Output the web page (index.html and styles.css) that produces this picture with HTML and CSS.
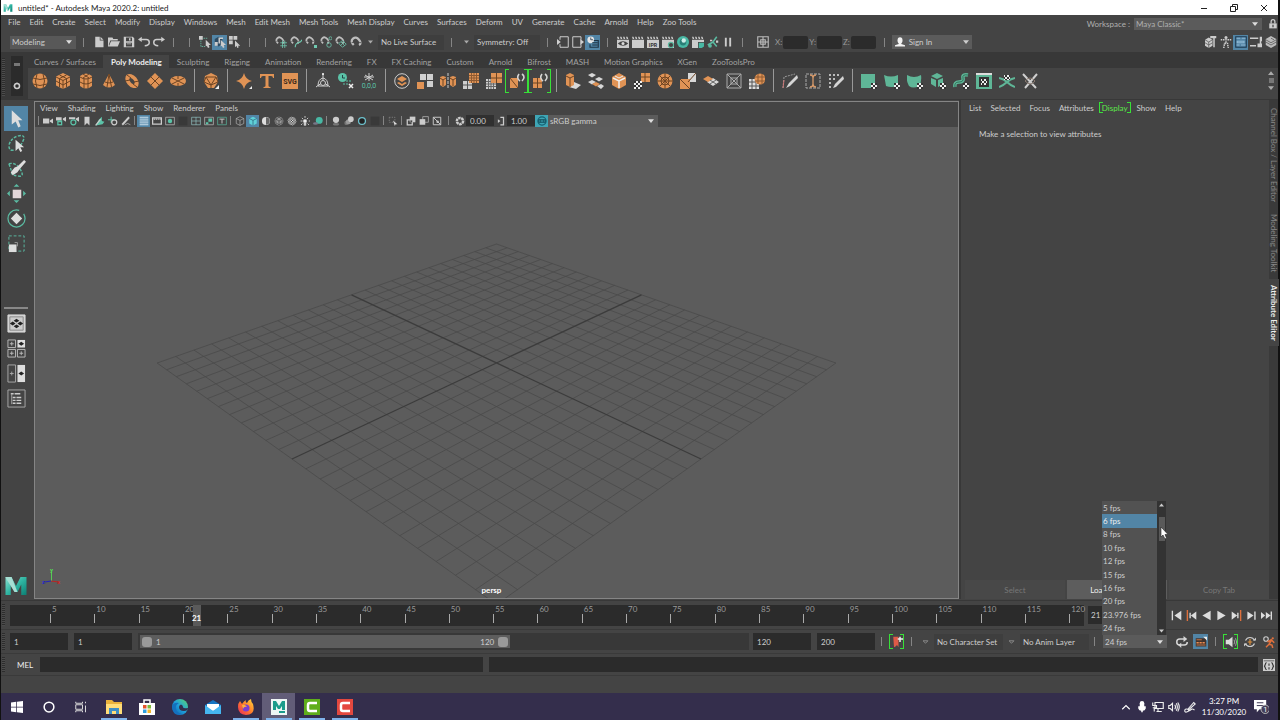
FILE: index.html
```html
<!DOCTYPE html>
<html lang="en">
<head>
<meta charset="utf-8">
<title>untitled* - Autodesk Maya 2020.2: untitled</title>
<link rel="stylesheet" href="styles.css">
</head>
<body>
<svg class="sprite" aria-hidden="true">
  <defs>
    <linearGradient id="teal" x1="0" y1="0" x2="1" y2="1"><stop offset="0" stop-color="#8be0d2"/><stop offset=".5" stop-color="#2fb5a2"/><stop offset="1" stop-color="#0b7f74"/></linearGradient>
    <linearGradient id="edgefill" x1="0" y1="1" x2="1" y2="0"><stop offset="0" stop-color="#0c59a4"/><stop offset=".5" stop-color="#1fa0dc"/><stop offset="1" stop-color="#5fd86a"/></linearGradient>
    <linearGradient id="foxfill" x1="1" y1="0" x2="0" y2="1"><stop offset="0" stop-color="#ffdc3c"/><stop offset=".5" stop-color="#ff7a2a"/><stop offset="1" stop-color="#e8265f"/></linearGradient>
    <pattern id="chk" width="4" height="4" patternUnits="userSpaceOnUse"><path fill="#eee" d="M0 0h4v4H0z"/><path fill="#333" d="M0 0h2v2H0zM2 2h2v2H2z"/></pattern>
  </defs>

  <symbol id="m" viewBox="0 0 16 16"><path fill="url(#teal)" d="M1 2h4l3 6 3-6h4v12h-3.500V7L9 12H7L4.500 7v7H1z"/><path fill="#a6ded3" d="M1 2h4l4 10H7L2 4z"/></symbol>
  <symbol id="caret" viewBox="0 0 8 5"><path fill="currentColor" d="M0 0h8L4 5z"/></symbol>
  <symbol id="caret-up" viewBox="0 0 8 5"><path fill="currentColor" d="M0 5h8L4 0z"/></symbol>
  <symbol id="caret-line" viewBox="0 0 8 5"><path fill="none" stroke="#999" d="M1 1h6L4 4z"/></symbol>
  <symbol id="lock" viewBox="0 0 16 16"><path fill="none" stroke="currentColor" stroke-width="2" d="M5 7V4a3 3 0 0 1 6 0v3"/><path fill="currentColor" d="M2 7h12v8H2z"/><path fill="#444" d="M7 9h2v4H7z"/></symbol>

  <symbol id="new" viewBox="0 0 16 16"><path fill="currentColor" d="M3 1h6v5h5v9H3zM10 1l4 4h-4z"/></symbol>
  <symbol id="open" viewBox="0 0 16 16"><path fill="currentColor" d="M0 2h6l1 2h6v2H3L1 12l1 2H0zM4 7h12l-3 7H1z"/></symbol>
  <symbol id="save" viewBox="0 0 16 16"><path fill="currentColor" fill-rule="evenodd" d="M1 1h12l2 2v12H1zM4 2v5h8V2zM4 9v5h8V9zM8 3h2v3H8zM5 10h6v1H5z"/></symbol>
  <symbol id="undo" viewBox="0 0 16 16"><path fill="currentColor" d="M5 1v7L0 4.500z"/><path fill="none" stroke="currentColor" stroke-width="2" d="M4 4.500h7q4 0 4 4T9 13"/></symbol>
  <symbol id="redo" viewBox="0 0 16 16"><path fill="currentColor" d="M11 1v7l5-3.500z"/><path fill="none" stroke="currentColor" stroke-width="2" d="M12 4.500H5q-4 0-4 4T7 13"/></symbol>
  <symbol id="arrow" viewBox="0 0 16 16"><path fill="currentColor" d="M4 1l9 8.500H9.500l2 5-2 1-2.200-5L4 13z"/></symbol>
  <symbol id="sel-h" viewBox="0 0 16 16"><path fill="currentColor" d="M0 0h5v5H0zM9 5l7 7h-3l1 3-2 1-1.500-3L9 14z"/><path stroke="#6fc9b0" stroke-dasharray="2 1" fill="none" d="M2.500 6v8H8M6 3h6"/></symbol>
  <symbol id="sel-o" viewBox="0 0 16 16"><path fill="#2c4b63" d="M1 4l5-3 5 3v7l-5 3-5-3z"/><path fill="currentColor" d="M1 8h4v5H1zM6 2h6v2H8v6H6zM9 5l7 7h-3l1 3-2 1-1.500-3L9 14z"/></symbol>
  <symbol id="sel-c" viewBox="0 0 16 16"><path fill="currentColor" d="M0 0h5v5H0zM6 0h5v5H6zM0 6h5v5H0zM8 6l7 7h-3l1 2-2 1-1-3-2 2z"/></symbol>
  <symbol id="mag" viewBox="0 0 16 16"><path fill="none" stroke="#bdbdbd" stroke-width="3" d="M5 12Q0 7 4 3.500t8 1.500 0 7"/><path stroke="#444" d="M2 9l4-1M10 8l5 1"/></symbol>
  <symbol id="mag-g" viewBox="0 0 16 16"><use href="#mag" width="13" height="13"/><path stroke="#6fc9b0" d="M10 6v10M13 6v10M7 9h9M7 13h9"/></symbol>
  <symbol id="mag-c" viewBox="0 0 16 16"><use href="#mag" width="13" height="13"/><path stroke="#6fc9b0" stroke-width="1.500" fill="none" d="M7 15q0-5 4-6t5-4"/></symbol>
  <symbol id="mag-p" viewBox="0 0 16 16"><use href="#mag" width="13" height="13"/><path fill="#6fc9b0" d="M12 12h4v4h-4z"/></symbol>
  <symbol id="mag-s" viewBox="0 0 16 16"><use href="#mag" width="13" height="13"/><circle cx="12" cy="12" r="3" fill="none" stroke="#6fc9b0"/><circle cx="14" cy="3" r="2" fill="none" stroke="#6fc9b0"/></symbol>
  <symbol id="mag-v" viewBox="0 0 16 16"><use href="#mag" width="13" height="13"/><path fill="none" stroke="#6fc9b0" d="M10 6l5 5-5 4-5-5zM8 8l5 5M12 8l-5 5"/></symbol>
  <symbol id="in" viewBox="0 0 16 16"><path fill="none" stroke="#d0d0d0" stroke-width="1.300" d="M4 5V1h11v14H4v-4"/><path fill="#d0d0d0" d="M0 4l5 4-5 4z"/></symbol>
  <symbol id="out" viewBox="0 0 16 16"><path fill="none" stroke="#d0d0d0" stroke-width="1.300" d="M12 5V1H1v14h11v-4"/><path fill="#d0d0d0" d="M11 4l5 4-5 4z"/></symbol>
  <symbol id="hist" viewBox="0 0 16 16"><circle cx="5" cy="5" r="4.500" fill="#e6e6e6"/><path fill="none" stroke="#234" d="M5 2v3h3"/><path fill="none" stroke="#1e3446" stroke-width="1.500" d="M9 6h6v9H4v-4M7 9h7M7 12h7"/></symbol>
  <symbol id="clap" viewBox="0 0 16 16"><path fill="currentColor" d="M0 5h16v11H0zM0 1h2l1 3H1zM4 1h2l1 3H5zM8 1h2l1 3H9zM12 1h2l1 3h-2z"/></symbol>
  <symbol id="clap-eye" viewBox="0 0 16 16"><use href="#clap"/><path fill="#444" d="M1 10q7-6 14 0-7 6-14 0"/><circle cx="8" cy="10" r="2" fill="#ddd"/></symbol>
  <symbol id="clap-gear" viewBox="0 0 16 16"><use href="#clap"/><circle cx="12" cy="12" r="3.500" fill="#444" stroke="#5bbba2" stroke-width="1.500"/></symbol>
  <symbol id="ball" viewBox="0 0 16 16"><circle cx="8" cy="8" r="8" fill="#48b8a4"/><circle cx="8" cy="8" r="4.500" fill="#2a7f77"/><circle cx="9" cy="6" r="3" fill="#cdeee8"/></symbol>
  <symbol id="clap-set" viewBox="0 0 16 16"><use href="#clap"/><path fill="#444" d="M8 8h8v8H8z"/><path fill="#48b8a4" d="M9 9h7v5l-3 2H9z"/></symbol>
  <symbol id="render-cut" viewBox="0 0 16 16"><path stroke="#5bbba2" stroke-width="2" fill="none" d="M1 12l7-4 5 6M8 8l5-7"/><circle cx="4" cy="13" r="2.500" fill="#5bbba2"/><path fill="#ccc" d="M12 6h3v3h-3zM4 5h3v2H4z"/></symbol>
  <symbol id="pause" viewBox="0 0 16 16"><path fill="currentColor" d="M3 1h3v14H3zM10 1h3v14h-3z"/></symbol>
  <symbol id="layout" viewBox="0 0 16 16"><path fill="none" stroke="#bbb" stroke-width="1.500" d="M1 1h14v14H1zM8 1v14M1 8h14M5 5h6v6H5z"/></symbol>
  <symbol id="user" viewBox="0 0 16 16"><ellipse cx="8" cy="5.500" rx="4" ry="5" fill="#f2f2f2"/><path fill="#f2f2f2" d="M6 8h4v3l6 2v2H0v-2l6-2z"/></symbol>
  <symbol id="kit" viewBox="0 0 16 16"><path fill="currentColor" d="M0 5l5-3 5 3v8l-5 3-5-3zM7 0h8v3h-2v12h-2V3H7z"/><path fill="none" stroke="#555" d="M0 5l5 3 5-3M5 8v8M0 9l5 3 5-3"/></symbol>
  <symbol id="rig" viewBox="0 0 16 16"><circle cx="8" cy="2" r="2" fill="currentColor"/><path stroke="currentColor" stroke-width="2" stroke-dasharray="2 1" fill="none" d="M1 5h14M8 4v6M5 16l1-6h4l1 6"/></symbol>
  <symbol id="attr" viewBox="0 0 16 16"><path fill="none" stroke="#1d3950" stroke-width="1.500" d="M1 1h14v14H1z"/><path fill="none" stroke="#8fb8d4" stroke-width="1.500" d="M2 3h5M9 3h5M3 7h9v2H3zM2 12h4M8 12h6"/></symbol>
  <symbol id="tset" viewBox="0 0 16 16"><path fill="currentColor" d="M0 2h11v2H0zM13 1h3v6h-3zM0 12h8v2H0zM10 10h6v5h-6zM13 6h2v5h-2z"/></symbol>
  <symbol id="layers" viewBox="0 0 16 16"><path fill="#bbb" d="M8 0l7 4v8l-7 4-7-4V4z"/><path fill="none" stroke="#555" d="M1 5l7 4 7-4M1 8l7 4 7-4M8 3l4 2"/></symbol>
  <symbol id="gear" viewBox="0 0 16 16"><circle cx="8" cy="8" r="5" fill="none" stroke="#ccc" stroke-width="3"/><path stroke="#ccc" stroke-width="2" stroke-dasharray="2 12" d="M1 8h14M8 1v14"/></symbol>

  <symbol id="sphere" viewBox="0 0 16 16"><circle cx="8" cy="8" r="7.500" fill="#e09355"/><path fill="none" stroke="#6d4423" d="M1 5q7 3 14 0M1 11q7 3 14 0M5 1q-3 7 0 14M11 1q3 7 0 14"/></symbol>
  <symbol id="cube" viewBox="0 0 16 16"><path fill="#e09355" d="M8 0l7 3.500v9L8 16l-7-3.500v-9z"/><path fill="none" stroke="#6d4423" d="M1 4l7 3.500L15 4M8 7.500V16M1 8l7 4 7-4M4.500 2l7 3.500V14M11.500 2l-7 3.500V14"/></symbol>
  <symbol id="cyl" viewBox="0 0 16 16"><path fill="#e09355" d="M2 3q6-5 12 0v10q-6 5-12 0z"/><path fill="none" stroke="#6d4423" d="M2 4q6 4 12 0M2 9q6 4 12 0M6 6v9M10 6v9M5 1l6 4M11 1L5 5"/></symbol>
  <symbol id="cone" viewBox="0 0 16 16"><path fill="#e09355" d="M8 1l6 11q-6 5-12 0z"/><path fill="none" stroke="#6d4423" d="M8 1L6 14M8 1l2.500 13M4 9q4 2 8 0"/></symbol>
  <symbol id="torus" viewBox="0 0 16 16"><ellipse cx="8" cy="8" rx="8" ry="5.500" transform="rotate(50 8 8)" fill="#e09355"/><ellipse cx="8" cy="8" rx="3.500" ry="1.800" transform="rotate(50 8 8)" fill="#444"/><path stroke="#6d4423" d="M3 2l4 3M1 8l5-1M13 14l-4-3M15 8l-5 1"/></symbol>
  <symbol id="plane" viewBox="0 0 16 16"><path fill="#e09355" d="M8 0l8 8-8 8-8-8z"/><path stroke="#6d4423" d="M4 4l8 8M12 4l-8 8"/></symbol>
  <symbol id="disc" viewBox="0 0 16 16"><ellipse cx="8" cy="8" rx="8" ry="5" fill="#e09355"/><path stroke="#6d4423" d="M2 5l12 6M14 5L2 11M8 3v3M8 10v3"/></symbol>
  <symbol id="plat" viewBox="0 0 16 16"><path fill="#e09355" d="M8 0l6 3 1 6-4 6H5L1 9l1-6z"/><path fill="none" stroke="#6d4423" d="M3 4h10l-5 8zM3 4L1 9l7 3 7-3-2-5M8 12v3"/><path fill="#eee" d="M16 12v4h-4z"/></symbol>
  <symbol id="star" viewBox="0 0 16 16"><path fill="#e09355" d="M8 0q1.500 6.500 8 8-6.500 1.500-8 8-1.500-6.500-8-8 6.500-1.500 8-8"/><path fill="#eee" d="M16 13v3h-3z"/></symbol>
  <symbol id="type" viewBox="0 0 16 16"><path fill="#e09355" d="M1 1h14v4h-1q0-2-2-2H9.500v10q0 1 2 1v1h-7v-1q2 0 2-1V3H4Q2 3 2 5H1z"/></symbol>
  <symbol id="block" viewBox="0 0 16 16"><path fill="#e09355" d="M0 0h16v16H0z"/></symbol>
  <symbol id="center" viewBox="0 0 16 16"><path fill="none" stroke="#cfcfcf" d="M8 8V1M8 9l-7 5M8 9l7 5M3 13q0-7 5-8 5 1 5 8z"/><circle cx="8" cy="10" r="2.500" fill="#444" stroke="#cfcfcf"/><circle cx="8" cy="1" r="1" fill="#fff"/></symbol>
  <symbol id="delhist" viewBox="0 0 16 16"><circle cx="4.500" cy="4.500" r="4.500" fill="#5bc3a8"/><path stroke="#244" fill="none" d="M4.500 2v3H7"/><path stroke="#5bc3a8" stroke-dasharray="2 1" d="M5 11h5M8 8h6"/><path stroke="#eee" stroke-width="1.500" d="M11 11l4 4M15 11l-4 4"/></symbol>
  <symbol id="freeze" viewBox="0 0 16 16"><path stroke="#cfcfcf" fill="none" d="M8 0v8M4 2l8 5M12 2L4 7M3 4h10"/></symbol>
  <symbol id="combine" viewBox="0 0 16 16"><circle cx="8" cy="8" r="7.300" fill="none" stroke="#cfcfcf"/><path fill="#e09355" d="M3 6l5-3 5 3-5 3zM3 10l2-1 3 2 3-2 2 1-5 3z"/></symbol>
  <symbol id="separate" viewBox="0 0 16 16"><path fill="#cfcfcf" d="M3 1h6v6H3zM10 1h6v6h-6zM10 8h6v6h-6z"/><path fill="#e09355" d="M0 9h7v7H0z"/></symbol>
  <symbol id="mirror" viewBox="0 0 16 16"><path fill="#e09355" d="M0 4l3-1 3 1v8l-3 2-3-2zM10 4l3-1 3 1v8l-3 2-3-2z"/><path fill="none" stroke="#6d4423" d="M0 5l3 2 3-2M3 7v6M10 5l3 2 3-2M13 7v6"/><path stroke="#ccc" stroke-dasharray="3 1" d="M8 0v16"/></symbol>
  <symbol id="smooth" viewBox="0 0 16 16"><path fill="#cfcfcf" d="M0 8h9v8H0z"/><path stroke="#555" d="M4.500 8v8M0 12h9" /><path fill="#e09355" d="M6 0h10v10H6z"/><path stroke="#8d5a32" d="M8.500 0v10M11 0v10M13.500 0v10M6 2.500h10M6 5h10M6 7.500h10"/></symbol>
  <symbol id="reduce" viewBox="0 0 16 16"><path fill="#cfcfcf" d="M0 6h10v10H0z"/><path stroke="#666" d="M2.500 6v10M5 6v10M7.500 6v10M0 8.500h10M0 11h10M0 13.500h10"/><path fill="#e09355" d="M5 0h11v10H5z"/><path stroke="#6d4423" d="M10.500 0v10M5 5h11"/></symbol>
  <symbol id="swap1" viewBox="0 0 16 16"><path fill="#e09355" d="M1 5h8v10H1z"/><path stroke="#6d4423" d="M1 5l8 10"/><path fill="none" stroke="#d5d5d5" stroke-width="1.600" d="M10 1q-3 4 1 7M13 8q4-4 0-7"/></symbol>
  <symbol id="swap2" viewBox="0 0 16 16"><path fill="#e09355" d="M1 5h9v10H1z"/><path stroke="#6d4423" d="M5.500 5v10M1 10h9"/><path fill="none" stroke="#d5d5d5" stroke-width="1.600" d="M10 1q-3 4 1 7M13 8q4-4 0-7"/></symbol>
  <symbol id="extrude" viewBox="0 0 16 16"><path fill="#d8d8d8" d="M9 9l7 3-5 4-7-2z"/><path fill="#e09355" d="M1 2l4-2 4 2v10l-4 2-4-2z"/><path fill="none" stroke="#6d4423" d="M1 3l4 2 4-2M5 5v9"/></symbol>
  <symbol id="bridge" viewBox="0 0 16 16"><path fill="#d8d8d8" d="M4 0l4 2-4 2.500L0 2zM11 4l4 2-4 2.500L7 6zM4 7l4 2-4 2.500L0 9zM13 11l3 2-3 3-4-3z"/><path fill="#e09355" d="M8 9l4 2-4 2.500L4 11z"/></symbol>
  <symbol id="bevel" viewBox="0 0 16 16"><path fill="#e09355" d="M8 0l7 4v8l-7 4-7-4V4z"/><path fill="none" stroke="#eee" stroke-width="1.500" d="M2 5l6 3 6-3M8 8v7"/><path stroke="#eee" fill="none" d="M4 3l4 2 4-2"/></symbol>
  <symbol id="merge" viewBox="0 0 16 16"><path fill="#e09355" d="M7 0h9v9H7z"/><path fill="url(#chk)" d="M0 8h8v8H0z"/><path stroke="#6d4423" d="M11 0v9M7 4h9"/></symbol>
  <symbol id="wheel" viewBox="0 0 16 16"><circle cx="8" cy="8" r="7.500" fill="#e09355"/><path fill="none" stroke="#6d4423" d="M8 0v16M0 8h16M3 3l10 10M13 3L3 13"/><circle cx="8" cy="8" r="4" fill="none" stroke="#6d4423"/></symbol>
  <symbol id="fill" viewBox="0 0 16 16"><path fill="#d8d8d8" d="M8 0h8v9H8z"/><path fill="#e09355" d="M0 6h10v10H0z"/><path stroke="#6d4423" d="M0 6l10 10M8 9l8-9"/></symbol>
  <symbol id="flats" viewBox="0 0 16 16"><path fill="#d8d8d8" d="M10 5l6 4-6 4-6-4z"/><path fill="#e09355" d="M5 3l5 3-5 3-5-3z"/><path stroke="#666" d="M7 7l6 4M13 7l-6 4"/></symbol>
  <symbol id="cage" viewBox="0 0 16 16"><path fill="none" stroke="#aaa" d="M1 1h14v14H1zM1 1l14 14M15 1L1 15M5 5h6v6H5z"/></symbol>
  <symbol id="remesh" viewBox="0 0 16 16"><path fill="#ddd" d="M0 6h10v10H0z"/><path stroke="#555" d="M3 6v10M7 6v10M0 9h10M0 13h10"/><circle cx="11" cy="6" r="5.500" fill="#e09355"/><path fill="none" stroke="#8d5a32" d="M9 1v10M13 1v10M6 4h10M6 8h10"/></symbol>
  <symbol id="quad" viewBox="0 0 16 16"><path fill="none" stroke="#999" stroke-dasharray="2 1" d="M1 15L2 4l11-3"/><path fill="#d5d5d5" d="M4 15l3-5 8-8 1 3-8 8z"/><path stroke="#c77" d="M1 15l1-8"/></symbol>
  <symbol id="loop" viewBox="0 0 16 16"><path fill="none" stroke="#aaa" stroke-dasharray="3 1" d="M1 1h14v14H1z"/><path fill="none" stroke="#d79a6a" stroke-width="1.300" d="M5 2q3 0 3 3v6q0 3-3 3M11 2q-3 0-3 3M11 14q-3 0-3-3"/></symbol>
  <symbol id="draw" viewBox="0 0 16 16"><path stroke="#bbb" stroke-dasharray="2 2" stroke-width="2" d="M1 2h10M1 6h7M1 10h4M1 14h3"/><path fill="#d5d5d5" d="M5 15l2-4 8-8 1 3-8 8z"/></symbol>
  <symbol id="uv1" viewBox="0 0 16 16"><path fill="#5fb697" d="M0 1h14v14H0z"/><path fill="url(#chk)" d="M10 10h6v6h-6z"/></symbol>
  <symbol id="uv2" viewBox="0 0 16 16"><path fill="#5fb697" d="M0 2q7 3 14 0v11q-7 2-12 0z"/><path fill="url(#chk)" d="M10 10h6v6h-6z"/></symbol>
  <symbol id="uv3" viewBox="0 0 16 16"><path fill="#5fb697" d="M0 2q7 4 14 0 1 7-2 11-6 3-10 0-3-5-2-11"/><path fill="url(#chk)" d="M10 10h6v6h-6z"/></symbol>
  <symbol id="uv4" viewBox="0 0 16 16"><path fill="#5fb697" d="M7 0l6 3-6 3-6-3zM1 5l5 2v7l-5-3zM13 5L8 7v7l5-3z"/><path fill="url(#chk)" d="M10 10h6v6h-6z"/></symbol>
  <symbol id="uv5" viewBox="0 0 16 16"><path fill="none" stroke="#5fb697" stroke-width="3.500" d="M2 14q-1-5 4-5t4-4 5-3"/><path stroke="#31705b" fill="none" d="M2 14q-1-5 4-5t4-4 5-3"/><path fill="url(#chk)" d="M10 10h6v6h-6z"/></symbol>
  <symbol id="uv6" viewBox="0 0 16 16"><path fill="#5fb697" d="M0 0h16v16H0z"/><path fill="#ddd" d="M0 0h16v2H0z"/><path fill="#333" d="M3 4h10v10H3z"/><path fill="url(#chk)" d="M5 6h6v6H5z"/></symbol>
  <symbol id="uv7" viewBox="0 0 16 16"><path fill="none" stroke="#5fb697" stroke-width="2" d="M0 5q5 1 8 4t8 5M16 5q-5 1-8 4t-8 5"/><path fill="url(#chk)" d="M5 2h6v5H5z"/></symbol>
  <symbol id="uv8" viewBox="0 0 16 16"><path stroke="#cfcfcf" stroke-width="2" d="M1 1l13 14M15 1L3 15"/><path fill="none" stroke="#8a7a70" d="M3 8q5-6 10 0-4 6-10 0"/></symbol>

  <symbol id="cam" viewBox="0 0 16 16"><path fill="currentColor" d="M0 4h10v8H0zM11 7l5-3v8l-5-3z"/></symbol>
  <symbol id="cam-l" viewBox="0 0 16 16"><path fill="currentColor" d="M0 2h9v5H0zM11 4l5-3v8l-5-3z"/><path fill="#5bc3a8" d="M2 7h8v8H2z"/><path fill="#444" d="M4 10h4v3H4z"/></symbol>
  <symbol id="cam-s" viewBox="0 0 16 16"><path fill="currentColor" d="M0 2h10v3H0zM11 4l5-3v8l-5-3z"/><circle cx="7" cy="10" r="4" fill="none" stroke="#5bc3a8" stroke-width="2"/></symbol>
  <symbol id="mark" viewBox="0 0 16 16"><path fill="currentColor" d="M4 1h8v14l-4-4-4 4z"/></symbol>
  <symbol id="leaf" viewBox="0 0 16 16"><path fill="#5bc3a8" d="M1 15l5-9 5-5v7l4 1-3 4z"/><path stroke="#ccc" stroke-width="2" d="M1 15L9 5"/></symbol>
  <symbol id="pan" viewBox="0 0 16 16"><path stroke="#5bc3a8" stroke-width="1.500" d="M5 1v10M0 6h10"/><circle cx="10" cy="10" r="4" fill="none" stroke="#ccc" stroke-width="2"/></symbol>
  <symbol id="pen" viewBox="0 0 16 16"><path stroke="#ccc" stroke-width="3" d="M2 14L13 2"/><path fill="none" stroke="#ccc" d="M6 14q5-4 9 0"/></symbol>
  <symbol id="lines" viewBox="0 0 16 16"><path stroke="#d5e5f2" stroke-width="1.500" d="M1 2h14M1 5h14M1 8h14M1 11h14M1 14h14"/></symbol>
  <symbol id="film" viewBox="0 0 16 16"><path fill="none" stroke="#ccc" stroke-width="2" d="M0 3h16M0 13h16M1 3v10M15 3v10"/><path stroke="#ccc" stroke-width="2" stroke-dasharray="2 1" d="M0 5h16"/></symbol>
  <symbol id="gate" viewBox="0 0 16 16"><path fill="none" stroke="#ccc" d="M1 2h14v12H1z"/><circle cx="8" cy="8" r="3.500" fill="#5bc3a8"/></symbol>
  <symbol id="dim" viewBox="0 0 16 16"><path fill="#393939" d="M1 1h14v14H1z"/></symbol>
  <symbol id="quadv" viewBox="0 0 16 16"><path fill="none" stroke="#9cc" d="M1 2h14v12H1zM8 2v12M1 8h14"/></symbol>
  <symbol id="safe" viewBox="0 0 16 16"><path fill="none" stroke="#ccc" d="M1 2h14v12H1z"/><path fill="#5bc3a8" d="M7 4h6v5H7zM3 10h4v3H3z"/></symbol>
  <symbol id="title" viewBox="0 0 16 16"><path fill="none" stroke="#5bc3a8" d="M1 2h14v12H1z"/><path stroke="#ccc" stroke-width="1.500" d="M4 5h8M8 5v7"/></symbol>
  <symbol id="wire" viewBox="0 0 16 16"><path fill="none" stroke="#bbb" d="M8 1l6 3v8l-6 3-6-3V4zM2 4l6 3 6-3M8 7v8"/></symbol>
  <symbol id="solid" viewBox="0 0 16 16"><path fill="#5fd0d8" d="M8 1l6 3v8l-6 3-6-3V4z"/><path fill="none" stroke="#234f66" d="M2 4l6 3 6-3M8 7v8"/></symbol>
  <symbol id="half" viewBox="0 0 16 16"><circle cx="8" cy="8" r="6.500" fill="#ddd"/><path fill="#666" d="M8 2a6 6 0 0 1 0 12z"/></symbol>
  <symbol id="wires" viewBox="0 0 16 16"><circle cx="8" cy="8" r="7" fill="#999"/><path fill="none" stroke="#333" d="M3 5l5-3 5 3v6l-5 3-5-3zM3 5l5 3 5-3M8 8v6"/></symbol>
  <symbol id="tex" viewBox="0 0 16 16"><circle cx="8" cy="8" r="7" fill="url(#chk)"/></symbol>
  <symbol id="light" viewBox="0 0 16 16"><circle cx="8" cy="8" r="3" fill="#eee"/><path stroke="#ccc" stroke-width="1.500" stroke-dasharray="3 10" d="M1 8h15M8 0v16M3 3l12 12M13 3L1 15"/><path fill="#ccc" d="M6 10h4v5H6z"/></symbol>
  <symbol id="shadow" viewBox="0 0 16 16"><circle cx="10" cy="7" r="5.500" fill="#48b8a4"/><ellipse cx="4" cy="12" rx="4" ry="2" fill="#778"/></symbol>
  <symbol id="ao" viewBox="0 0 16 16"><circle cx="8" cy="6" r="5" fill="#ccc"/><ellipse cx="8" cy="13" rx="5" ry="2" fill="#777"/></symbol>
  <symbol id="blur" viewBox="0 0 16 16"><circle cx="4" cy="11" r="3.500" fill="#777"/><circle cx="7" cy="9" r="4" fill="#999"/><circle cx="11" cy="5" r="4.500" fill="#ccc"/></symbol>
  <symbol id="aa" viewBox="0 0 16 16"><circle cx="8" cy="8" r="5.500" fill="#222" stroke="#6ec3cf" stroke-width="2"/></symbol>
  <symbol id="iso" viewBox="0 0 16 16"><path fill="none" stroke="#999" stroke-dasharray="2 2" d="M2 2h9v8H2z"/><path fill="#ddd" d="M8 7l7 6h-3l-1 3z"/></symbol>
  <symbol id="xray" viewBox="0 0 16 16"><path fill="#ccc" d="M6 1h9v9H6z"/><path fill="none" stroke="#ccc" stroke-width="2" d="M2 6h8v8H2z"/><path fill="#444" d="M7 7h3v3H7z"/></symbol>
  <symbol id="xray2" viewBox="0 0 16 16"><path fill="none" stroke="#ccc" d="M6 1h9v9H6z"/><path fill="#ccc" d="M1 5h9v9H1z"/></symbol>
  <symbol id="xray3" viewBox="0 0 16 16"><path fill="none" stroke="#ccc" stroke-width="1.500" d="M2 2h12v12H2zM2 2l12 12"/><circle cx="9" cy="9" r="2" fill="#ccc"/></symbol>
  <symbol id="expo" viewBox="0 0 16 16"><circle cx="8" cy="8" r="5" fill="none" stroke="#ccc" stroke-width="4" stroke-dasharray="4 1"/></symbol>
  <symbol id="gamma" viewBox="0 0 16 16"><path fill="#ccc" d="M3 5l4 3-4 3z"/><path fill="none" stroke="#ccc" stroke-width="2" d="M7 2h5v12H7"/></symbol>
  <symbol id="cm" viewBox="0 0 16 16"><circle cx="8" cy="8" r="6.500" fill="none" stroke="#135f70" stroke-width="2"/><path fill="none" stroke="#124d5b" stroke-width="1.500" d="M3 6h10v4H3zM6 6v4M10 6v4"/></symbol>

  <symbol id="lasso" viewBox="0 0 20 20"><path fill="none" stroke="#5bbba2" stroke-width="1.500" stroke-dasharray="3 1.500" d="M7 17Q2 18 2 12 4 4 12 2t5 5-4 4"/><path fill="#ddd" d="M9 6l9 8h-4l2 4-2 1-2-4-3 3z"/></symbol>
  <symbol id="paint" viewBox="0 0 20 20"><path fill="none" stroke="#5bbba2" stroke-width="1.500" stroke-dasharray="3 1.500" d="M2 5q7-2 12 6t-2 7-7-3-3-10"/><path fill="#ddd" d="M4 14l4-5 3-1 7-7 2 2-7 8-2 3-5 3z"/></symbol>
  <symbol id="move" viewBox="0 0 20 20"><path fill="#e4d5d8" d="M6 6h9v9H6z"/><path fill="#5bbba2" d="M10 0l3 3H7zM10 20l3-3H7zM0 10l3-3v6zM20 10l-3-3v6z"/></symbol>
  <symbol id="rotate" viewBox="0 0 20 20"><circle cx="10" cy="10" r="9" fill="none" stroke="#5bbba2" stroke-width="1.300" stroke-dasharray="45 6"/><path fill="#ddd" d="M10 4l6 6-6 6-6-6z"/></symbol>
  <symbol id="scale" viewBox="0 0 20 20"><path fill="none" stroke="#5bbba2" stroke-dasharray="3 2" d="M2 2h16v16H2z"/><path fill="#ddd" d="M2 11h8v8H2z"/><path fill="none" stroke="#999" d="M8 9h3v4"/></symbol>
  <symbol id="v1" viewBox="0 0 20 20"><path fill="#ccc" stroke="#ddd" d="M1 1h18v18H1z"/><path fill="none" stroke="#888" d="M3 3h14v14H3z"/><path fill="#222" d="M10 5l3 2-3 2-3-2zM10 11l3 2-3 2-3-2zM6 8l3 2-3 2-3-2zM14 8l3 2-3 2-3-2z"/></symbol>
  <symbol id="v4" viewBox="0 0 20 20"><path fill="none" stroke="#bbb" d="M1 1h8v8H1zM1 11h8v8H1zM11 11h8v8h-8zM5 3v4M3 5h4M5 13v4M3 15h4M15 13v4M13 15h4"/><path fill="#ddd" d="M11 1h8v8h-8z"/><path fill="#222" d="M12 5l3-2 3 2-3 2z"/></symbol>
  <symbol id="v2" viewBox="0 0 20 20"><path fill="none" stroke="#aaa" d="M1 1h8v18H1zM5 8v4M3 10h4"/><path fill="#ddd" d="M11 1h8v18h-8z"/><path fill="#222" d="M12 10l3-2 3 2-3 2z"/></symbol>
  <symbol id="vo" viewBox="0 0 20 20"><path fill="none" stroke="#aaa" d="M1 1h18v18H1z"/><path stroke="#ccc" stroke-width="1.500" stroke-dasharray="3 1 8" d="M4 5h10M6 9h9M6 12h9M6 15h9"/><path stroke="#aaa" d="M5 5v11"/></symbol>

  <symbol id="start" viewBox="0 0 16 16"><path fill="currentColor" d="M1 1h2v14H1zM15 1v14L5 8z"/></symbol>
  <symbol id="prevkey" viewBox="0 0 16 16"><path fill="#e0703c" d="M1 0h2v16H1z"/><path fill="currentColor" d="M5 4h2v8H5zM15 2v12L7 8z"/></symbol>
  <symbol id="back" viewBox="0 0 16 16"><path fill="currentColor" d="M14 1v14L2 8z"/></symbol>
  <symbol id="play" viewBox="0 0 16 16"><path fill="currentColor" d="M2 1v14l12-7z"/></symbol>
  <symbol id="nextkey" viewBox="0 0 16 16"><path fill="#e0703c" d="M13 0h2v16h-2z"/><path fill="currentColor" d="M9 4h2v8H9zM1 2v12l8-6z"/></symbol>
  <symbol id="step" viewBox="0 0 16 16"><path fill="currentColor" d="M12 2h2v12h-2zM2 2v12l9-6z"/></symbol>
  <symbol id="last" viewBox="0 0 16 16"><path fill="currentColor" d="M14 2h2v12h-2zM0 3v10l6-5zM7 3v10l7-5z"/></symbol>
  <symbol id="key" viewBox="0 0 16 16"><path fill="#e05a48" d="M3 1h7v14l-2-3-2 2-2 1z"/><path stroke="#eee" stroke-width="2" d="M12 1v7M9 4h7"/></symbol>
  <symbol id="cycle" viewBox="0 0 16 16"><path fill="none" stroke="#d5d5d5" stroke-width="2" d="M11 4H5Q1 4 1 8t4 4M5 12h6q4 0 4-4"/><path fill="#d5d5d5" d="M10 0l5 4-5 4zM7 9v7l-4-4z"/></symbol>
  <symbol id="cache" viewBox="0 0 16 16"><path fill="#43342e" d="M1 3h14v11H1z"/><path stroke="#ee8c50" stroke-width="2" stroke-dasharray="3 1" d="M2 9h12"/><path stroke="#ee8c50" d="M2 12h12M2 5h7"/><path fill="#eee" d="M11 1h5v5z"/></symbol>
  <symbol id="sound" viewBox="0 0 16 16"><path fill="#ddd" d="M1 5h4l5-4v14l-5-4H1z"/><path fill="none" stroke="#bbb" d="M12 5q2 3 0 6M14 3q3 5 0 10"/></symbol>
  <symbol id="auto" viewBox="0 0 16 16"><path fill="none" stroke="#ccc" stroke-width="1.500" d="M2 6a6.500 6.500 0 0 1 12 0M14 10a6.500 6.500 0 0 1-12 0"/><path fill="#ccc" d="M12 6h4V2zM0 14v-4h4z"/><path stroke="#e0903c" stroke-width="1.500" d="M8 4v8M5 8h6"/></symbol>
  <symbol id="run" viewBox="0 0 16 16"><circle cx="4" cy="4" r="3" fill="none" stroke="#ccc" stroke-width="1.500"/><path fill="none" stroke="#e0703c" stroke-width="2" d="M6 8l5-3 4 4M11 6l-3 5 4 1 1 4M8 11l-4 4"/><circle cx="13" cy="3" r="1.500" fill="#e0703c"/></symbol>
  <symbol id="script" viewBox="0 0 16 16"><path fill="#ccc" d="M0 0h16v16H0z"/><path fill="#444" d="M1 2h14v1H1z"/><path fill="none" stroke="#333" stroke-width="1.500" d="M5 5q-2 0-2 2.500L2 9.500l1 2Q3 14 5 14M11 5q2 0 2 2.500l1 2-1 2q0 2.500-2 2.500M8 6v3M8 11v3"/></symbol>

  <symbol id="win" viewBox="0 0 16 16"><path fill="#fff" d="M0 2l7-1v6.500H0zM8 1l8-1v7.500H8zM0 8.500h7V15l-7-1zM8 8.500h8V16l-8-1z"/></symbol>
  <symbol id="ring" viewBox="0 0 16 16"><circle cx="8" cy="8" r="6.500" fill="none" stroke="#fff" stroke-width="2"/></symbol>
  <symbol id="task" viewBox="0 0 16 16"><path fill="none" stroke="#ddd" stroke-width="1.300" d="M1 5h9v6H1zM1 1v2h9V1M1 15v-2h9v2M14 1v2M14 6v9"/></symbol>
  <symbol id="folder" viewBox="0 0 16 16"><path fill="#e9b23c" d="M0 1h6l2 2h8v12H0z"/><path fill="#ffdd78" d="M0 5h16v10H0z"/><path fill="#3e8ec4" d="M3 9h10v6h-3v-3H6v3H3z"/></symbol>
  <symbol id="store" viewBox="0 0 16 16"><path fill="none" stroke="#fff" stroke-width="1.500" d="M5 5V1h6v4"/><path fill="#fff" d="M0 4h16v12H0z"/><path fill="#e5532d" d="M4 6h3.500v3.500H4z"/><path fill="#7db93a" d="M8.500 6H12v3.500H8.500z"/><path fill="#2f9fe0" d="M4 10.500h3.500V14H4z"/><path fill="#f3b52c" d="M8.500 10.500H12V14H8.500z"/></symbol>
  <symbol id="edge" viewBox="0 0 16 16"><circle cx="8" cy="8" r="8" fill="url(#edgefill)"/><path fill="#342e4c" d="M16 9q0 3-4 3-5 0-5-4 0-2 2-2.500 2 .5 2 2.500t5 1"/><path fill="#1470be" d="M0 8q1-5 7-4-4 2-3 6t6 5q-9 3-10-7"/></symbol>
  <symbol id="mail" viewBox="0 0 16 16"><path fill="#1675c2" d="M0 6l8-5 8 5v9H0z"/><path fill="#fff" d="M2 5h12v4l-6 3-6-3z"/><path fill="#45b6f0" d="M0 6l8 6 8-6v9H0z"/></symbol>
  <symbol id="fox" viewBox="0 0 16 16"><path fill="url(#foxfill)" d="M8 1q-1 2 1 3 1-3 4-4 0 3 2 5 3 11-7 11Q0 15 0 8q0-4 2-6l2 3q2-3 4-4"/><circle cx="8" cy="9" r="3.500" fill="#7b3fd0"/><path fill="#ffb13b" d="M4 6q3-1 5 2-3-1-4 2z"/></symbol>
  <symbol id="mtile" viewBox="0 0 16 16"><path fill="#eef6f5" d="M0 0h16v16H0z"/><path fill="#1a9b8b" d="M2 2h3l3 5 3-5h3v9h-3V7l-2 3H7L5 7v4H2z"/><path fill="#1a9b8b" d="M8 12h6v2H8z"/></symbol>
  <symbol id="ctile" viewBox="0 0 16 16"><path fill="currentColor" d="M0 0h16v16H0z"/><path fill="none" stroke="#fff" stroke-width="2.500" d="M13 4H6Q4 4 4 6v4q0 2 2 2h7"/></symbol>
  <symbol id="chev" viewBox="0 0 16 16"><path fill="none" stroke="#fff" stroke-width="1.500" d="M3 11l5-5 5 5"/></symbol>
  <symbol id="mic" viewBox="0 0 16 16"><rect x="5" y="0" width="6" height="10" rx="3" fill="#fff"/><path fill="#fff" d="M3 7h10v3q-1 3-4 3v2H7v-2q-3 0-4-3z"/></symbol>
  <symbol id="net" viewBox="0 0 16 16"><path fill="none" stroke="#eee" stroke-width="1.500" d="M4 2h11v8H4zM8 10v4M6 14h7M1 2v4h5v3H1M3 9v5"/></symbol>
  <symbol id="vol" viewBox="0 0 16 16"><path fill="none" stroke="#eee" stroke-width="1.500" d="M1 6h2l3-3v10L3 10H1zM9 5q2 3 0 6M11 3q3 5 0 10M13 2q4 6 0 12"/></symbol>
  <symbol id="ink" viewBox="0 0 16 16"><path fill="none" stroke="#eee" stroke-width="1.500" d="M5 11l8-9 2 2-9 8zM5 11q-4-1-4 2t4 1 5-3 4 1"/></symbol>
  <symbol id="note" viewBox="0 0 16 16"><path fill="#fff" d="M0 1h13v10H6l-3 3v-3H0z"/><path stroke="#342e4c" d="M3 4h7M3 7h7"/><circle cx="12" cy="11" r="4.500" fill="#45405a" stroke="#bbb"/></symbol>
</svg>

<div class="app">
  <header class="titlebar">
    <svg class="s10"><use href="#m"/></svg>
    <span class="titlebar-text">untitled* - Autodesk Maya 2020.2: untitled</span>
    <div class="window-buttons">
      <button aria-label="Minimize"><svg class="s8" viewBox="0 0 8 8"><path stroke="#222" d="M1 4.500h6"/></svg></button>
      <button aria-label="Restore"><svg class="s8" viewBox="0 0 8 8"><path fill="none" stroke="#222" d="M.5 2.500h5v5h-5zM2.500 2V.5h5v5H6"/></svg></button>
      <button aria-label="Close"><svg class="s8" viewBox="0 0 8 8"><path stroke="#222" d="M1 1l6 6M7 1L1 7"/></svg></button>
    </div>
  </header>

  <div class="menubar">
    <nav class="menus" aria-label="Main menu">
      <button>File</button><button>Edit</button><button>Create</button><button>Select</button><button>Modify</button><button>Display</button><button>Windows</button><button>Mesh</button><button>Edit Mesh</button><button>Mesh Tools</button><button>Mesh Display</button><button>Curves</button><button>Surfaces</button><button>Deform</button><button>UV</button><button>Generate</button><button>Cache</button><button>Arnold</button><button>Help</button><button>Zoo Tools</button>
    </nav>
    <div class="workspace">
      <label for="ws">Workspace :</label>
      <span class="select select-ws"><select id="ws"><option>Maya Classic*</option></select><svg><use href="#caret"/></svg></span>
      <button class="tool" aria-label="Lock workspace"><svg class="s10"><use href="#lock"/></svg></button>
    </div>
  </div>

  <div class="statusline">
    <span class="select select-mode"><select aria-label="Menu set"><option>Modeling</option></select><svg><use href="#caret"/></svg></span>
    <i class="sep"></i>
    <button class="tool" aria-label="New scene"><svg><use href="#new"/></svg></button><button class="tool" aria-label="Open scene"><svg><use href="#open"/></svg></button><button class="tool" aria-label="Save scene"><svg><use href="#save"/></svg></button><button class="tool" aria-label="Undo"><svg><use href="#undo"/></svg></button><button class="tool" aria-label="Redo"><svg><use href="#redo"/></svg></button>
    <i class="sep"></i><i class="sep"></i>
    <button class="tool" aria-label="Select by hierarchy"><svg><use href="#sel-h"/></svg></button><button class="tool on" aria-label="Select by object"><svg><use href="#sel-o"/></svg></button><button class="tool" aria-label="Select by component"><svg><use href="#sel-c"/></svg></button>
    <i class="sep"></i><i class="sep"></i>
    <button class="tool" aria-label="Snap to grids"><svg><use href="#mag-g"/></svg></button><button class="tool" aria-label="Snap to curves"><svg><use href="#mag-c"/></svg></button><button class="tool" aria-label="Snap to points"><svg><use href="#mag-p"/></svg></button><button class="tool" aria-label="Snap to projected center"><svg><use href="#mag-s"/></svg></button><button class="tool" aria-label="Snap to view planes"><svg><use href="#mag-v"/></svg></button><button class="tool" aria-label="Make live"><svg><use href="#mag"/></svg></button>
    <svg class="drop"><use href="#caret"/></svg>
    <button class="plate plate-status">No Live Surface</button>
    <i class="sep"></i>
    <svg class="drop"><use href="#caret"/></svg>
    <button class="plate plate-status">Symmetry: Off</button>
    <i class="sep"></i>
    <button class="tool" aria-label="Inputs"><svg><use href="#in"/></svg></button><button class="tool" aria-label="Outputs"><svg><use href="#out"/></svg></button><button class="tool on" aria-label="Construction history"><svg><use href="#hist"/></svg></button>
    <i class="sep"></i>
    <button class="tool" aria-label="Render view"><svg><use href="#clap-eye"/></svg></button><button class="tool" aria-label="Render frame"><svg><use href="#clap"/></svg></button><button class="tool" aria-label="IPR render"><svg viewBox="0 0 16 16"><use href="#clap" width="16" height="16"/><text x="8" y="14" text-anchor="middle" class="ipr">IPR</text></svg></button><button class="tool" aria-label="Render settings"><svg><use href="#clap-gear"/></svg></button><button class="tool" aria-label="Hypershade"><svg><use href="#ball"/></svg></button><button class="tool" aria-label="Render setup"><svg><use href="#clap-set"/></svg></button><button class="tool" aria-label="Light editor"><svg><use href="#render-cut"/></svg></button><button class="tool" aria-label="Pause viewport"><svg class="s10"><use href="#pause"/></svg></button>
    <i class="sep"></i>
    <button class="tool tool-layout" aria-label="Input mode"><svg><use href="#layout"/></svg></button>
    <label class="coord">X:<input type="text"></label><label class="coord">Y:<input type="text"></label><label class="coord">Z:<input type="text"></label>
    <i class="sep"></i>
    <button class="signin"><svg class="s10"><use href="#user"/></svg><span>Sign In</span><svg class="drop-lg"><use href="#caret"/></svg></button>
    <div class="status-right">
      <button class="tool" aria-label="Modeling toolkit"><svg><use href="#kit"/></svg></button><button class="tool" aria-label="HumanIK"><svg><use href="#rig"/></svg></button><button class="tool on" aria-label="Attribute editor"><svg><use href="#attr"/></svg></button><button class="tool" aria-label="Tool settings"><svg><use href="#tset"/></svg></button><button class="tool" aria-label="Channel box"><svg><use href="#layers"/></svg></button>
    </div>
  </div>

  <div class="shelf">
    <div class="grip"></div>
    <div class="shelf-handle"><i class="dash"></i><svg class="s8"><use href="#gear"/></svg></div>
    <div class="shelf-main">
      <div class="tabs" role="tablist">
        <button role="tab">Curves / Surfaces</button><button role="tab" class="active" aria-selected="true">Poly Modeling</button><button role="tab">Sculpting</button><button role="tab">Rigging</button><button role="tab">Animation</button><button role="tab">Rendering</button><button role="tab">FX</button><button role="tab">FX Caching</button><button role="tab">Custom</button><button role="tab">Arnold</button><button role="tab">Bifrost</button><button role="tab">MASH</button><button role="tab">Motion Graphics</button><button role="tab">XGen</button><button role="tab">ZooToolsPro</button>
      </div>
      <div class="shelf-icons">
        <button aria-label="Sphere"><svg><use href="#sphere"/></svg></button><button aria-label="Cube"><svg><use href="#cube"/></svg></button><button aria-label="Cylinder"><svg><use href="#cyl"/></svg></button><button aria-label="Cone"><svg><use href="#cone"/></svg></button><button aria-label="Torus"><svg><use href="#torus"/></svg></button><button aria-label="Plane"><svg><use href="#plane"/></svg></button><button aria-label="Disc"><svg><use href="#disc"/></svg></button>
        <i></i><button aria-label="Platonic solid"><svg><use href="#plat"/></svg></button>
        <i></i><button aria-label="Super shape"><svg><use href="#star"/></svg></button><button aria-label="Type"><svg><use href="#type"/></svg></button><button aria-label="Import vector"><svg viewBox="0 0 16 16"><use href="#block" width="16" height="16"/><text x="8" y="11" text-anchor="middle" class="svgt">SVG</text></svg></button>
        <i></i><button aria-label="Center pivot"><svg><use href="#center"/></svg></button><button aria-label="Delete history"><svg><use href="#delhist"/></svg></button><button aria-label="Freeze transforms"><svg viewBox="0 0 16 16"><use href="#freeze" width="16" height="16"/><text x="8" y="15" text-anchor="middle" class="zeros">0,0,0</text></svg></button>
        <i></i><button aria-label="Combine"><svg><use href="#combine"/></svg></button><button aria-label="Separate"><svg><use href="#separate"/></svg></button><button aria-label="Mirror"><svg><use href="#mirror"/></svg></button><button aria-label="Smooth"><svg><use href="#smooth"/></svg></button><button aria-label="Reduce"><svg><use href="#reduce"/></svg></button><button class="flagged" aria-label="Retopologize"><svg><use href="#swap1"/></svg></button><button class="flagged" aria-label="Remesh"><svg><use href="#swap2"/></svg></button>
        <i></i><button aria-label="Extrude"><svg><use href="#extrude"/></svg></button><button aria-label="Bridge"><svg><use href="#bridge"/></svg></button><button aria-label="Bevel"><svg><use href="#bevel"/></svg></button><button aria-label="Merge"><svg><use href="#merge"/></svg></button><button aria-label="Circularize"><svg><use href="#wheel"/></svg></button><button aria-label="Fill hole"><svg><use href="#fill"/></svg></button><button aria-label="Duplicate face"><svg><use href="#flats"/></svg></button><button aria-label="Lattice"><svg><use href="#cage"/></svg></button><button aria-label="Subdivide"><svg><use href="#remesh"/></svg></button>
        <i></i><button aria-label="Multi-cut"><svg><use href="#quad"/></svg></button><button aria-label="Target weld"><svg><use href="#loop"/></svg></button><button aria-label="Quad draw"><svg><use href="#draw"/></svg></button>
        <i></i><button aria-label="Planar map"><svg><use href="#uv1"/></svg></button><button aria-label="Cylindrical map"><svg><use href="#uv2"/></svg></button><button aria-label="Spherical map"><svg><use href="#uv3"/></svg></button><button aria-label="Automatic map"><svg><use href="#uv4"/></svg></button><button aria-label="Contour stretch"><svg><use href="#uv5"/></svg></button><button aria-label="UV editor"><svg><use href="#uv6"/></svg></button><button aria-label="Unfold"><svg><use href="#uv7"/></svg></button><button aria-label="Cut and sew"><svg><use href="#uv8"/></svg></button>
        <span class="shelf-scroll"><svg class="drop-lg"><use href="#caret-up"/></svg><b></b><svg class="drop-lg"><use href="#caret"/></svg></span>
      </div>
    </div>
  </div>

  <main class="workarea">
    <aside class="toolbox" aria-label="Tool box">
      <button class="on" aria-label="Select tool"><svg><use href="#arrow"/></svg></button>
      <button aria-label="Lasso tool"><svg><use href="#lasso"/></svg></button>
      <button aria-label="Paint select"><svg><use href="#paint"/></svg></button>
      <button aria-label="Move"><svg><use href="#move"/></svg></button>
      <button aria-label="Rotate"><svg><use href="#rotate"/></svg></button>
      <button aria-label="Scale"><svg><use href="#scale"/></svg></button>
      <hr>
      <button aria-label="Single view"><svg><use href="#v1"/></svg></button>
      <button aria-label="Four views"><svg><use href="#v4"/></svg></button>
      <button aria-label="Two views"><svg><use href="#v2"/></svg></button>
      <button aria-label="Outliner"><svg><use href="#vo"/></svg></button>
      <svg class="toolbox-logo"><use href="#m"/></svg>
    </aside>

    <section class="viewport">
      <nav class="panel-menu"><button>View</button><button>Shading</button><button>Lighting</button><button>Show</button><button>Renderer</button><button>Panels</button></nav>
      <div class="panel-tools">
        <i class="sep"></i><button aria-label="Camera"><svg><use href="#cam"/></svg></button><button aria-label="Lock camera"><svg><use href="#cam-l"/></svg></button><button aria-label="Camera attributes"><svg><use href="#cam-s"/></svg></button><button aria-label="Bookmark"><svg><use href="#mark"/></svg></button><button aria-label="Image plane"><svg><use href="#leaf"/></svg></button><button aria-label="Pan and zoom"><svg><use href="#pan"/></svg></button><button aria-label="Grease pencil"><svg><use href="#pen"/></svg></button>
        <i class="sep"></i><button class="on" aria-label="Grid"><svg><use href="#lines"/></svg></button><button aria-label="Film gate"><svg><use href="#film"/></svg></button><button aria-label="Resolution gate"><svg><use href="#gate"/></svg></button><button aria-label="Gate mask"><svg><use href="#dim"/></svg></button><button aria-label="Field chart"><svg><use href="#quadv"/></svg></button><button aria-label="Safe action"><svg><use href="#safe"/></svg></button><button aria-label="Safe title"><svg><use href="#title"/></svg></button>
        <i class="sep"></i><button aria-label="Wireframe"><svg><use href="#wire"/></svg></button><button class="on" aria-label="Smooth shade"><svg><use href="#solid"/></svg></button><button aria-label="Default material"><svg><use href="#half"/></svg></button><button aria-label="Wireframe on shaded"><svg><use href="#wires"/></svg></button><button aria-label="Textured"><svg><use href="#tex"/></svg></button><button aria-label="Lights"><svg><use href="#light"/></svg></button><button aria-label="Shadows"><svg><use href="#shadow"/></svg></button>
        <i class="sep"></i><button aria-label="Ambient occlusion"><svg><use href="#ao"/></svg></button><button aria-label="Motion blur"><svg><use href="#blur"/></svg></button><button aria-label="Anti-aliasing"><svg><use href="#aa"/></svg></button><button aria-label="Depth of field"><svg><use href="#dim"/></svg></button>
        <i class="sep"></i><button aria-label="Isolate select"><svg><use href="#iso"/></svg></button>
        <i class="sep"></i><button aria-label="X-ray"><svg><use href="#xray"/></svg></button><button aria-label="X-ray joints"><svg><use href="#xray2"/></svg></button><button aria-label="X-ray components"><svg><use href="#xray3"/></svg></button>
        <i class="sep sep-wide"></i><button aria-label="Exposure"><svg><use href="#expo"/></svg></button><input type="text" aria-label="Exposure value" value="0.00"><button aria-label="Gamma"><svg><use href="#gamma"/></svg></button><input type="text" aria-label="Gamma value" value="1.00"><button class="cm" aria-label="Color management"><svg><use href="#cm"/></svg></button>
        <span class="select select-view"><select aria-label="View transform"><option>sRGB gamma</option></select><svg><use href="#caret"/></svg></span>
      </div>
      <div class="canvas">
        <svg class="scene" viewBox="0 0 923 471" preserveAspectRatio="xMidYMid slice">
          <path id="grid-lines"/><path id="grid-axes"/>
        </svg>
        <svg class="gizmo" viewBox="0 0 20 20"><path stroke="#5c5" d="M9.500 14V5"/><path stroke="#b22" d="M9 14l7 1"/><path stroke="#22b" d="M9 14l-6 1"/><text x="8" y="5" fill="#5d5">y</text><text x="15" y="17" fill="#c22">x</text><text x="0" y="17" fill="#22c">z</text></svg>
        <span class="camera-name">persp</span>
      </div>
    </section>

    <section class="attributes">
      <nav class="attr-menu"><button>List</button><button>Selected</button><button>Focus</button><button>Attributes</button><button class="flagged hot">Display</button><button>Show</button><button>Help</button></nav>
      <p>Make a selection to view attributes</p>
      <div class="attr-buttons"><button disabled>Select</button><button>Load Attributes</button><button disabled>Copy Tab</button></div>
    </section>
    <div class="side-tabs"><button>Channel Box / Layer Editor</button><button>Modeling Toolkit</button><button class="active">Attribute Editor</button></div>
  </main>

  <div class="timeline">
    <div class="grip"></div>
    <div class="track"><ol id="ticks"></ol><span class="now">21</span></div>
    <input class="frame" type="text" aria-label="Current frame" value="21">
    <div class="playback">
      <button aria-label="Go to start"><svg><use href="#start"/></svg></button><button aria-label="Previous key"><svg><use href="#prevkey"/></svg></button><button aria-label="Play backwards"><svg><use href="#back"/></svg></button><button aria-label="Play forwards"><svg><use href="#play"/></svg></button><button aria-label="Next key"><svg><use href="#nextkey"/></svg></button><button aria-label="Step forward"><svg><use href="#step"/></svg></button><button aria-label="Go to end"><svg><use href="#last"/></svg></button>
    </div>
  </div>

  <div class="rangebar">
    <div class="grip"></div>
    <input type="text" aria-label="Animation start" value="1"><input type="text" aria-label="Playback start" value="1">
    <div class="range"><div class="range-bar"><b></b><span>1</span><span class="range-end">120</span><b></b></div></div>
    <input type="text" aria-label="Playback end" value="120"><input type="text" aria-label="Animation end" value="200">
    <div class="range-opts">
      <i class="sep"></i><button class="tool flagged" aria-label="Auto key"><svg><use href="#key"/></svg></button><i class="sep"></i>
      <svg class="drop"><use href="#caret-line"/></svg><button class="plate plate-range">No Character Set</button>
      <svg class="drop"><use href="#caret-line"/></svg><button class="plate plate-range">No Anim Layer</button>
      <i class="sep"></i>
      <div class="fps">
        <ul role="listbox" aria-label="Frame rates"><li>5 fps</li><li class="active">6 fps</li><li>8 fps</li><li>10 fps</li><li>12 fps</li><li>15 fps</li><li>16 fps</li><li>20 fps</li><li>23.976 fps</li><li>24 fps</li></ul>
        <div class="fps-scroll"><svg><use href="#caret-up"/></svg><b></b><svg><use href="#caret"/></svg></div>
        <span class="select"><select aria-label="Frame rate"><option>24 fps</option></select><svg><use href="#caret"/></svg></span>
        <svg class="cursor" viewBox="0 0 8 12"><path fill="#fff" stroke="#222" stroke-width=".6" d="M1 0v10l2-2 2 4 1.500-1L5 7.500h3z"/></svg>
      </div>
      <button class="tool" aria-label="Loop"><svg><use href="#cycle"/></svg></button>
      <button class="tool on" aria-label="Cached playback"><svg><use href="#cache"/></svg></button>
      <i class="sep"></i>
      <button class="tool flagged" aria-label="Mute"><svg><use href="#sound"/></svg></button>
      <button class="tool" aria-label="Auto update"><svg><use href="#auto"/></svg></button>
      <button class="tool" aria-label="Animation preferences"><svg><use href="#run"/></svg></button>
    </div>
  </div>

  <div class="command">
    <div class="grip"></div>
    <label for="mel">MEL</label><input id="mel" type="text"><input class="output" type="text" aria-label="Command output" readonly>
    <button aria-label="Script editor"><svg><use href="#script"/></svg></button>
  </div>
  <div class="helpline"></div>
</div>

<footer class="taskbar">
  <button aria-label="Start"><svg class="s12"><use href="#win"/></svg></button><button aria-label="Cortana"><svg class="s12"><use href="#ring"/></svg></button><button aria-label="Task view"><svg class="s12"><use href="#task"/></svg></button><button class="app-btn running" aria-label="File Explorer"><svg><use href="#folder"/></svg></button><button class="app-btn" aria-label="Store"><svg><use href="#store"/></svg></button><button class="app-btn" aria-label="Edge"><svg><use href="#edge"/></svg></button><button class="app-btn" aria-label="Mail"><svg><use href="#mail"/></svg></button><button class="app-btn running" aria-label="Firefox"><svg><use href="#fox"/></svg></button><button class="app-btn running focused" aria-label="Maya"><svg><use href="#mtile"/></svg></button><button class="app-btn running green" aria-label="Camtasia"><svg><use href="#ctile"/></svg></button><button class="app-btn running red" aria-label="Recorder"><svg><use href="#ctile"/></svg></button>
  <div class="tray">
    <button aria-label="Hidden icons"><svg><use href="#chev"/></svg></button><button aria-label="Microphone"><svg><use href="#mic"/></svg></button><button aria-label="Network"><svg><use href="#net"/></svg></button><button aria-label="Volume"><svg><use href="#vol"/></svg></button><button aria-label="Ink workspace"><svg><use href="#ink"/></svg></button>
    <time datetime="2020-11-30T15:27">3:27 PM<br>11/30/2020</time>
    <button class="notes" aria-label="Notifications"><svg viewBox="0 0 16 16"><use href="#note" width="16" height="16"/><text x="12" y="14" text-anchor="middle" class="badge">1</text></svg></button>
  </div>
</footer>
<script src="scene.js"></script>
</body>
</html>
```

FILE: styles.css
```css
* { box-sizing: border-box; }
html, body { height: 100%; }
body {
  margin: 0;
  padding: 0 2px 0 1px;
  display: flex;
  flex-direction: column;
  background: #111;
  color: #cdcdcd;
  font: 8px/10px Lato, "Open Sans", sans-serif;
  overflow: hidden;
}
button, input, select { font: inherit; color: inherit; margin: 0; border: 0; background: none; }
button { padding: 0; white-space: nowrap; }
svg { display: block; flex: none; }
.sprite { position: absolute; width: 0; height: 0; }
.s8 { width: 8px; height: 8px; }
.s10 { width: 10px; height: 10px; }
.s12 { width: 12px; height: 12px; }
.ipr { font: bold 7px Roboto, sans-serif; fill: #333; }
.svgt { font: bold 7px Roboto, sans-serif; fill: #3c2a1c; }
.zeros { font: 7px Roboto, sans-serif; fill: #5bc3a8; }
.badge { font: 8px Roboto, sans-serif; fill: #fff; }

.app { flex: 1; min-height: 0; display: flex; flex-direction: column; background: #444; }

.titlebar { display: flex; align-items: center; gap: 5px; height: 15px; padding: 0 2px; background: #fff; color: #222; }
.titlebar-text { flex: 1; }
.window-buttons { display: flex; gap: 22px; padding-right: 8px; }

.menubar { display: flex; justify-content: space-between; height: 17px; }
.menus { display: flex; height: 14px; padding-left: 2px; }
.menus button { padding: 0 4px 0 5px; }
.workspace { display: flex; align-items: center; gap: 6px; padding-top: 1px; color: #b0b0b0; }
.workspace .tool { width: 10px; }
.workspace .select { margin-left: -2px; }

.select { position: relative; display: flex; align-items: center; background: #5b5b5b; height: 13px; }
.select select { appearance: none; width: 100%; height: 100%; padding: 0 12px 0 2px; outline: none; }
.select svg { position: absolute; right: 4px; width: 6px; height: 4px; color: #ddd; pointer-events: none; }
.select-ws { width: 128px; height: 12px; }
.select-mode { width: 66px; margin-left: 9px; background: #585858; }
.select-view { width: 110px; height: 12px; }

.statusline { display: flex; align-items: center; height: 21px; border-bottom: 1px solid #383838; }
.sep { flex: none; width: 1px; height: 9px; margin: 0 7px; background: #858585; }
.statusline .sep + .sep { margin-left: 8px; }
.tool { flex: none; display: flex; align-items: center; justify-content: center; width: 15px; height: 15px; color: #ccc; }
.tool svg { width: 12px; height: 12px; }
.tool svg.s10 { width: 10px; height: 10px; }
.on { background: #5285a6; }
.drop { width: 5px; height: 4px; margin: 0 5px; color: #aaa; }
.drop-lg { width: 6px; height: 4px; }
.plate { height: 15px; padding: 0 3px; background: #3e3e3e; text-align: left; flex: none; }
.plate-status { width: 66px; }
.tool-layout { margin: 0 5px; }
.coord { display: flex; align-items: center; gap: 1px; color: #999; }
.coord input { width: 25px; height: 13px; margin-right: 1px; background: #2b2b2b; border-radius: 2px; }
.signin { display: flex; align-items: center; gap: 4px; width: 80px; height: 14px; padding: 0 3px; background: #5b5b5b; text-align: left; }
.signin span { flex: 1; }
.status-right { display: flex; margin-left: auto; }

.grip { flex: none; width: 3px; margin: 3px 1px; background: repeating-linear-gradient(#2d2d2d 0 1px, #4c4c4c 1px 2px); }
.shelf { display: flex; height: 46px; padding-top: 2px; background: #383838; }
.shelf-handle { display: flex; flex-direction: column; align-items: center; justify-content: space-between; width: 12px; margin: 1px 5px 3px; padding: 7px 0 6px; background: #2b2b2b; }
.shelf-handle .dash { width: 6px; height: 3px; background: #777; }
.shelf-main { flex: 1; min-width: 0; }
.tabs { display: flex; height: 13px; }
.tabs button { padding: 0 7px 0 8px; color: #a2a2a2; }
.tabs button:first-child { padding-left: 6px; }
.tabs .active { background: #444; color: #eee; font-weight: bold; }
.shelf-icons { display: flex; align-items: center; height: 31px; padding: 0 0 6px; background: #444; }
.shelf-icons button { flex: none; display: flex; align-items: center; justify-content: center; width: 23px; height: 24px; }
.shelf-icons svg { width: 16px; height: 16px; }
.shelf-icons i { flex: none; width: 1px; height: 23px; margin: 0 4px 0 5px; background: #999; }
.shelf-icons .shelf-scroll { display: flex; flex-direction: column; align-items: center; gap: 3px; margin: 0 4px 0 auto; color: #aaa; }
.shelf-scroll svg.drop-lg { width: 6px; height: 4px; }
.shelf-scroll b { width: 5px; height: 5px; background: #777; }
.flagged {
  border: solid #38e038;
  border-width: 0 1px;
  background:
    linear-gradient(#38e038, #38e038) 0 0 / 3px 1px no-repeat,
    linear-gradient(#38e038, #38e038) 0 100% / 3px 1px no-repeat,
    linear-gradient(#38e038, #38e038) 100% 0 / 3px 1px no-repeat,
    linear-gradient(#38e038, #38e038) 100% 100% / 3px 1px no-repeat;
}

.workarea { flex: 1; min-height: 0; display: flex; padding-bottom: 1px; border-top: 1px solid #383838; }
.toolbox { flex: none; display: flex; flex-direction: column; width: 33px; padding: 6px 6px 0 3px; }
.toolbox button { flex: none; display: flex; align-items: center; justify-content: center; height: 25px; color: #ddd; }
.toolbox svg { width: 19px; height: 19px; }
.toolbox hr { width: 24px; height: 2px; margin: 51px 0 2px; border: 0; background: #888; }
.toolbox svg.toolbox-logo { width: 24px; height: 24px; margin: auto 0 1px; }

.viewport { flex: 1; min-width: 0; display: flex; flex-direction: column; margin-top: 1px; border: 1px solid #858585; }
.panel-menu { display: flex; height: 12px; }
.panel-menu button { padding: 0 5px; }
.panel-tools { display: flex; align-items: center; height: 13px; padding-left: 1px; }
.panel-tools .sep { margin: 0 2px; }
.panel-tools .sep-wide { margin: 0 4px 0 5px; }
.panel-tools button { flex: none; display: flex; align-items: center; justify-content: center; width: 13px; height: 12px; color: #ccc; }
.panel-tools button svg { width: 10px; height: 10px; }
.panel-tools input { width: 28px; height: 11px; padding: 0 4px; background: #303030; }
.panel-tools .cm { background: #3fa5b5; }
.canvas { position: relative; flex: 1; min-height: 0; background: #5c5c5c; }
.scene { position: absolute; inset: 0; width: 100%; height: 100%; fill: none; }
#grid-lines { stroke: #4a4a4a; stroke-width: .8; }
#grid-axes { stroke: #3c3c3c; stroke-width: 1.3; }
.gizmo { position: absolute; left: 7px; bottom: 11px; width: 20px; height: 20px; font: bold 6px Roboto, sans-serif; }
.camera-name { position: absolute; left: 0; right: 0; bottom: 3px; padding-right: 10px; text-align: center; font-weight: bold; color: #fff; }

.attributes { flex: none; display: flex; flex-direction: column; width: 310px; padding-left: 4px; border-left: 2px solid #383838; }
.attr-menu { display: flex; height: 15px; align-items: center; }
.attr-menu button { height: 11px; padding: 0 5px 0 4px; }
.attr-menu .hot { padding: 0 2px; margin: 0 2px 0 0; color: #5dea4a; }
.attributes p { flex: 1; margin: 14px 14px 0; }
.attr-buttons { display: grid; grid-template-columns: repeat(3, 1fr); gap: 2px; height: 19px; }
.attr-buttons button { background: #5d5d5d; color: #eee; }
.attr-buttons button:disabled { background: #484848; color: #777; }
.side-tabs { flex: none; display: flex; flex-direction: column; align-items: center; width: 9px; padding-top: 2px; background: #3a3a3a; }
.side-tabs button { padding: 6px 0; writing-mode: vertical-rl; color: #888; }
.side-tabs .active { background: #444; color: #eee; font-weight: bold; }

.timeline { flex: none; display: flex; align-items: center; height: 30px; border-top: 1px solid #383838; border-bottom: 1px solid #3a3a3a; }
.timeline .grip, .rangebar .grip, .command .grip { align-self: stretch; margin-right: 5px; }
.track { position: relative; flex: 1; height: 21px; background: #2b2b2b; }
#ticks { display: grid; grid-template-columns: repeat(23, 3fr) 1fr; height: 100%; margin: 0; padding: 0 0 0 40px; list-style: none; color: #999; line-height: 9px; }
#ticks li { min-width: 0; padding-left: 2px; }
#ticks li::after { content: ""; display: block; width: 1px; height: 9px; margin-left: -2px; background: #aaa; }
.now { position: absolute; top: 0; bottom: 0; left: 17%; display: flex; justify-content: center; width: 8px; padding-top: 8px; background: #5a5a5a; color: #fff; font-weight: bold; }
.frame { width: 68px; height: 18px; margin: 0 15px 0 4px; padding: 0 3px; background: #2b2b2b; }
.playback { display: flex; gap: 4px; padding-right: 6px; }
.playback button { color: #ddd; }
.playback svg { width: 11px; height: 11px; }

.rangebar { flex: none; display: flex; align-items: center; height: 24px; border-bottom: 1px solid #3a3a3a; }
.rangebar input { flex: none; width: 58px; height: 17px; margin-right: 6px; padding: 0 4px; background: #2b2b2b; }
.range { flex: 1; height: 17px; padding: 2px; margin-right: 4px; background: #383838; }
.range-bar { display: flex; align-items: center; gap: 4px; width: 61%; height: 13px; padding: 0 2px; background: #5d5d5d; }
.range-bar b { width: 10px; height: 10px; border-radius: 3px; background: #999; }
.range-end { margin-left: auto; }
.range-opts { flex: none; display: flex; align-items: center; }
.range-opts .sep { margin: 0 5px; }
.rangebar .range-opts .drop { width: 7px; margin: 0 5px; }
.range-opts .plate { height: 16px; }
.plate-range { width: 69px; }
.range-opts > .tool { margin: 0 2px; }
.rangebar .range-opts > .sep:first-child { margin-left: 0; }
.fps { position: relative; width: 64px; margin: 0 5px 0 3px; }
.fps ul { position: absolute; left: -1px; bottom: 13px; width: 55px; height: 134px; display: grid; grid-template-rows: repeat(10, 1fr); margin: 0; padding: 0; list-style: none; background: #525252; }
.fps li { display: flex; align-items: center; padding-left: 1px; }
.fps li.active { background: #5285a6; color: #eee; }
.fps-scroll { position: absolute; left: 54px; bottom: 13px; width: 9px; height: 134px; display: flex; flex-direction: column; align-items: center; padding: 2px 0; background: #333; color: #ccc; }
.fps-scroll svg { width: 5px; height: 4px; }
.fps-scroll b { width: 6px; height: 24px; margin: 10px 0 auto; background: #5a5a5a; }
.cursor { position: absolute; left: 57px; bottom: 109px; width: 8px; height: 12px; }

.command { flex: none; display: flex; align-items: center; height: 22px; border-bottom: 1px solid #3a3a3a; }
.command label { width: 30px; padding-left: 7px; color: #eee; }
.command input { flex: 442; min-width: 0; height: 15px; background: #2b2b2b; margin-right: 6px; }
.command .output { flex: 770; margin-right: 5px; }
.command button { margin-right: 3px; }
.command button svg { width: 12px; height: 12px; }
.helpline { flex: none; height: 17px; }

.taskbar { flex: none; display: flex; height: 27px; background: #342e4c; color: #fff; }
.taskbar button { display: flex; align-items: center; justify-content: center; width: 32px; }
.taskbar .app-btn { width: 33px; border: solid transparent; border-width: 2px 0; }
.app-btn svg { width: 16px; height: 16px; }
.taskbar .running { background: linear-gradient(#7fb2ea, #7fb2ea) center bottom / 26px 2px no-repeat border-box; }
.taskbar .focused { background-color: #625d78; }
.taskbar .green { color: #5fae1c; }
.taskbar .red { color: #e4483f; }
.tray { display: flex; align-items: center; margin-left: auto; }
.tray button { width: 16px; }
.tray svg { width: 12px; height: 12px; }
.tray time { width: 48px; margin-left: 2px; text-align: center; line-height: 11px; }
.tray .notes { width: 26px; margin-right: 4px; }
.tray .notes svg { width: 15px; height: 15px; }
```

FILE: scene.js
```js
// Perspective ground grid: 24 x 24 cells centred on the origin.
const CX = 461.5, CY = 236, SPREAD = 169.7, DROP = 79.7, K = 0.17, HALF = 12;

function project(u, v) {
  const depth = 1 - K * (u + v);
  const x = CX + SPREAD * (u - v) / depth;
  const y = CY + DROP * (u + v) / depth;
  return x.toFixed(1) + " " + y.toFixed(1);
}

let lines = "", axes = "";
for (let i = -HALF; i <= HALF; i++) {
  const t = i / HALF;
  const d = "M" + project(t, -1) + "L" + project(t, 1) + "M" + project(-1, t) + "L" + project(1, t);
  if (i === 0) axes += d; else lines += d;
}
document.getElementById("grid-lines").setAttribute("d", lines);
document.getElementById("grid-axes").setAttribute("d", axes);

const ticks = document.getElementById("ticks");
for (let f = 5; f <= 120; f += 5) {
  const li = document.createElement("li");
  li.textContent = f;
  ticks.append(li);
}
```
